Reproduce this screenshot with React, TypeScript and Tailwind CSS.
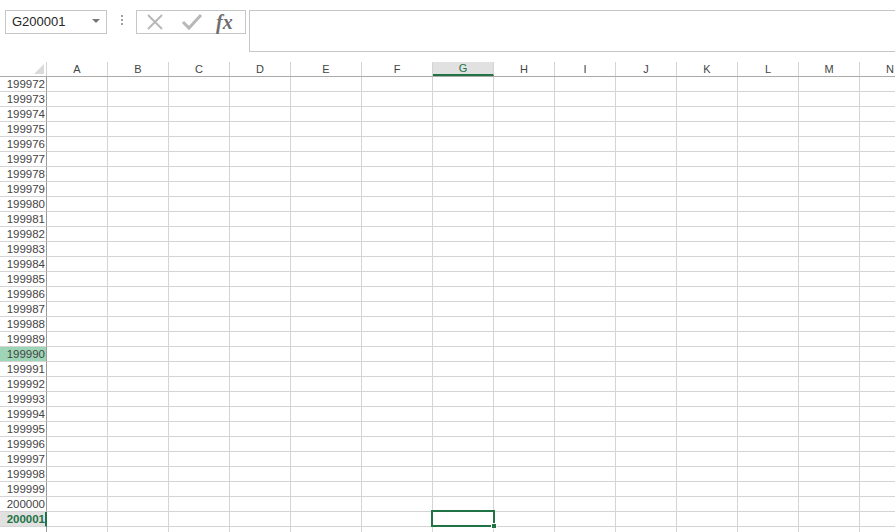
const COLUMNS = [
  { label: 'A', width: 'w-[61px]' },
  { label: 'B', width: 'w-[61px]' },
  { label: 'C', width: 'w-[61px]' },
  { label: 'D', width: 'w-[61px]' },
  { label: 'E', width: 'w-[71px]' },
  { label: 'F', width: 'w-[71px]' },
  { label: 'G', width: 'w-[61px]' },
  { label: 'H', width: 'w-[61px]' },
  { label: 'I', width: 'w-[61px]' },
  { label: 'J', width: 'w-[61px]' },
  { label: 'K', width: 'w-[61px]' },
  { label: 'L', width: 'w-[61px]' },
  { label: 'M', width: 'w-[61px]' },
  { label: 'N', width: 'w-[61px]' },
];

const FIRST_ROW = 199972;
const LAST_ROW = 200002;
const ACTIVE_ROW = 200001;
const HOVER_ROW = 199990;
const ACTIVE_COL = 'G';

const ROWS = Array.from({ length: LAST_ROW - FIRST_ROW + 1 }, (_, i) => FIRST_ROW + i);

function FormulaBar() {
  return (
    <div className="flex h-[62px] items-start bg-white">
      <div className="relative ml-[5px] mt-[10px] flex h-[24px] w-[102px] items-center border border-[#c6c6c6] pl-[6px] text-[13px] text-[#262626]">
        G200001
        <span className="absolute right-[6px] top-[8px] h-0 w-0 border-x-[4px] border-t-[4px] border-x-transparent border-t-[#777]" />
      </div>
      <div className="ml-[14px] mt-[15px] flex flex-col gap-[2px]">
        <span className="h-[2px] w-[2px] bg-[#a0a0a0]" />
        <span className="h-[2px] w-[2px] bg-[#a0a0a0]" />
        <span className="h-[2px] w-[2px] bg-[#a0a0a0]" />
      </div>
      <div className="ml-[13px] mt-[10px] flex h-[24px] w-[110px] items-center border border-[#c6c6c6]">
        <svg className="ml-[8px]" width="20" height="20" viewBox="0 0 20 20">
          <path d="M3 3 L17 17 M17 3 L3 17" stroke="#b8b8b8" strokeWidth="2" fill="none" />
        </svg>
        <svg className="ml-[16px]" width="22" height="20" viewBox="0 0 22 20">
          <path d="M2 10 L8 16 L20 3" stroke="#b8b8b8" strokeWidth="3" fill="none" />
        </svg>
        <span className="ml-[13px] font-['Liberation_Serif',serif] text-[20px] font-bold italic leading-none text-[#6f6f6f]">
          fx
        </span>
      </div>
      <div className="ml-[3px] mt-[10px] h-[42px] flex-1 border border-r-0 border-[#c6c6c6]" />
    </div>
  );
}

function HeaderRow() {
  return (
    <div className="flex h-[15px] border-b border-[#ababab]">
      <div className="relative w-[47px] shrink-0 border-r border-[#d4d4d4]">
        <span className="absolute bottom-[2px] right-[2px] h-0 w-0 border-b-[10px] border-l-[10px] border-b-[#dadada] border-l-transparent" />
      </div>
      {COLUMNS.map((col) => {
        const active = col.label === ACTIVE_COL;
        return (
          <div
            key={col.label}
            className={
              active
                ? `${col.width} flex shrink-0 items-center justify-center border-r border-b-2 border-r-[#d4d4d4] border-b-[#217346] bg-[#e1e1e1] text-[#217346]`
                : `${col.width} flex shrink-0 items-center justify-center border-r border-[#d4d4d4] text-[#444]`
            }
          >
            {col.label}
          </div>
        );
      })}
    </div>
  );
}

function Row({ n }: { n: number }) {
  const active = n === ACTIVE_ROW;
  const hover = n === HOVER_ROW;
  let head = 'w-[47px] shrink-0 border-b border-r border-b-[#d4d4d4] border-r-[#9b9b9b] pr-[1px] text-right text-[#444]';
  if (hover) head = 'w-[47px] shrink-0 border-b border-r border-b-[#d4d4d4] border-r-[#9b9b9b] bg-[#9fd5b7] pr-[1px] text-right text-[#444]';
  if (active) head = 'w-[47px] shrink-0 border-b border-r-2 border-b-[#d4d4d4] border-r-[#217346] bg-[#e1e1e1] text-right font-bold text-[#217346]';
  return (
    <div className="flex h-[15px]">
      <div className={`${head} leading-[14px] text-[11.5px]`}>{n < LAST_ROW ? n : ''}</div>
      {COLUMNS.map((col) => (
        <div key={col.label} className={`${col.width} shrink-0 border-b border-r border-[#d4d4d4]`} />
      ))}
    </div>
  );
}

export default function App() {
  return (
    <div className="h-[532px] w-[895px] overflow-hidden bg-white font-['Liberation_Sans',Arial,sans-serif]">
      <FormulaBar />
      <div className="relative text-[11px]">
        <HeaderRow />
        {ROWS.map((n) => (
          <Row key={n} n={n} />
        ))}
        <div className="absolute left-[431px] top-[448px] h-[17px] w-[64px] border-2 border-[#217346]">
          <span className="absolute -bottom-[4px] -right-[4px] h-[6px] w-[6px] border border-white bg-[#217346]" />
        </div>
      </div>
    </div>
  );
}
